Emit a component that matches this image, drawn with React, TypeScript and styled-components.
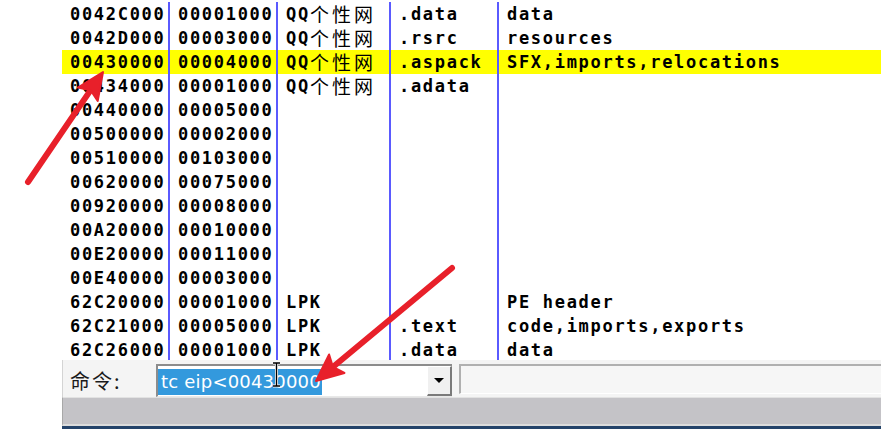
import React from 'react'
import styled, { createGlobalStyle } from 'styled-components'

const GlobalStyle = createGlobalStyle`
  html, body {
    margin: 0;
    padding: 0;
    background: #ffffff;
    overflow: hidden;
  }
`

type MemRow = {
  address: string
  size: string
  owner?: string
  section?: string
  contains?: string
  selected?: boolean
}

const ROWS: MemRow[] = [
  { address: '0042C000', size: '00001000', owner: 'QQ个性网', section: '.data', contains: 'data' },
  { address: '0042D000', size: '00003000', owner: 'QQ个性网', section: '.rsrc', contains: 'resources' },
  {
    address: '00430000',
    size: '00004000',
    owner: 'QQ个性网',
    section: '.aspack',
    contains: 'SFX,imports,relocations',
    selected: true,
  },
  { address: '00434000', size: '00001000', owner: 'QQ个性网', section: '.adata' },
  { address: '00440000', size: '00005000' },
  { address: '00500000', size: '00002000' },
  { address: '00510000', size: '00103000' },
  { address: '00620000', size: '00075000' },
  { address: '00920000', size: '00008000' },
  { address: '00A20000', size: '00010000' },
  { address: '00E20000', size: '00011000' },
  { address: '00E40000', size: '00003000' },
  { address: '62C20000', size: '00001000', owner: 'LPK', contains: 'PE header' },
  { address: '62C21000', size: '00005000', owner: 'LPK', section: '.text', contains: 'code,imports,exports' },
  { address: '62C26000', size: '00001000', owner: 'LPK', section: '.data', contains: 'data' },
]

// 把中文字符拆出来单独用 CJK 字体
const renderOwner = (text?: string) => {
  if (!text) return null
  const parts = text.split(/([\u4e00-\u9fff]+)/).filter(Boolean)
  return parts.map((p, i) => (/[\u4e00-\u9fff]/.test(p) ? <Cjk key={i}>{p}</Cjk> : <span key={i}>{p}</span>))
}

type Pt = [number, number]

const arrowShape = (tail: Pt, tip: Pt, len = 27, half = 12) => {
  const dx = tip[0] - tail[0]
  const dy = tip[1] - tail[1]
  const d = Math.hypot(dx, dy)
  const ux = dx / d
  const uy = dy / d
  const bx = tip[0] - ux * len
  const by = tip[1] - uy * len
  const nx = -uy
  const ny = ux
  const notchX = bx + ux * 5
  const notchY = by + uy * 5
  const head = [
    `${tip[0]},${tip[1]}`,
    `${bx + nx * half},${by + ny * half}`,
    `${notchX},${notchY}`,
    `${bx - nx * half},${by - ny * half}`,
  ].join(' ')
  return { line: { x1: tail[0], y1: tail[1], x2: notchX, y2: notchY }, head }
}

const ARROWS: { tail: Pt; tip: Pt }[] = [
  { tail: [28, 182], tip: [103, 72] },
  { tail: [452, 268], tip: [316, 381] },
]

const App: React.FC = () => {
  return (
    <>
      <GlobalStyle />
      <Page>
        <Window>
          <Table>
            {ROWS.map((row, i) => (
              <Row key={row.address} $selected={!!row.selected} $first={i === 0}>
                <Cell>{row.address}</Cell>
                <Cell>{row.size}</Cell>
                <Cell>{renderOwner(row.owner)}</Cell>
                <Cell>{row.section}</Cell>
                <Cell $last>{row.contains}</Cell>
              </Row>
            ))}
          </Table>
          <CommandBar>
            <CommandLabel>命令:</CommandLabel>
            <ComboBox>
              <ComboInput>
                <Selection>tc eip&lt;00430000</Selection>
              </ComboInput>
              <DropButton>
                <DropArrow />
              </DropButton>
            </ComboBox>
            <InfoField />
          </CommandBar>
          <StatusBar />
        </Window>
        <BottomEdge />

        <Overlay width="881" height="429" viewBox="0 0 881 429">
          {/* I-beam 鼠标光标 */}
          <g stroke="#ffffff" strokeWidth="3" fill="none">
            <path d="M273 363 H280 M276.5 363 V386 M273 386 H280" />
          </g>
          <g stroke="#000000" strokeWidth="1.4" fill="none">
            <path d="M273 363 H280 M276.5 363 V386 M273 386 H280" />
          </g>
          {ARROWS.map((a, i) => {
            const s = arrowShape(a.tail, a.tip)
            return (
              <g key={i}>
                <line {...s.line} stroke="#e8202a" strokeWidth="6" strokeLinecap="round" />
                <polygon points={s.head} fill="#e8202a" stroke="#e8202a" strokeWidth="2" strokeLinejoin="round" />
              </g>
            )
          })}
        </Overlay>
      </Page>
    </>
  )
}

export default App

const Page = styled.div`
  position: relative;
  width: 881px;
  height: 429px;
  overflow: hidden;
  background: #ffffff;
  display: flex;
  flex-direction: column;
`

const Window = styled.div`
  margin-left: 62px;
  display: flex;
  flex-direction: column;
  flex: 1;
`

const Table = styled.div`
  height: 360px;
  overflow: hidden;
  font-family: 'DejaVu Sans Mono', 'Liberation Mono', monospace;
  font-weight: bold;
  font-size: 17px;
  letter-spacing: 1.7px;
  color: #000000;
`

const Row = styled.div<{ $selected: boolean; $first: boolean }>`
  display: grid;
  grid-template-columns: 108px 108px 113px 108px 1fr;
  height: ${(p) => (p.$first ? 26 : 24)}px;
  padding-top: ${(p) => (p.$first ? 2 : 0)}px;
  box-sizing: border-box;
  background: ${(p) => (p.$selected ? '#ffff00' : 'transparent')};
`

const Cell = styled.div<{ $last?: boolean }>`
  box-sizing: border-box;
  height: 24px;
  line-height: 24px;
  padding-left: 8px;
  white-space: nowrap;
  overflow: hidden;
  border-right: ${(p) => (p.$last ? 'none' : '2px solid #5a5aff')};
`

const Cjk = styled.span`
  display: inline-block;
  height: 24px;
  overflow: hidden;
  font-family: 'Noto Sans CJK SC', sans-serif;
  font-weight: 400;
  font-size: 19px;
  letter-spacing: 3px;
  vertical-align: top;
  line-height: 24px;
`

const CommandBar = styled.div`
  height: 37px;
  box-sizing: border-box;
  background: #f4f4f4;
  border-left: 1px solid #d4d4d4;
  display: flex;
  align-items: center;
  padding-left: 7px;
`

const CommandLabel = styled.div`
  width: 86px;
  font-family: 'Noto Sans CJK SC', sans-serif;
  font-size: 20px;
  color: #1a1a1a;
  letter-spacing: 2px;
  margin-top: 3px;
`

const ComboBox = styled.div`
  display: flex;
  width: 296px;
  height: 33px;
  box-sizing: border-box;
  margin-top: 4px;
  border-top: 2px solid #8c8c8c;
  border-left: 2px solid #8c8c8c;
  border-bottom: 1px solid #e8e8e8;
  background: #ffffff;
`

const ComboInput = styled.div`
  flex: 1;
  display: flex;
  align-items: center;
  padding-top: 1px;
`

const Selection = styled.span`
  display: inline-block;
  height: 26px;
  line-height: 26px;
  padding: 0 1px 0 3px;
  background: #3399dd;
  color: #ffffff;
  font-family: 'DejaVu Sans', 'Liberation Sans', sans-serif;
  font-size: 18px;
  letter-spacing: 0.2px;
`

const DropButton = styled.div`
  width: 25px;
  box-sizing: border-box;
  display: flex;
  align-items: center;
  justify-content: center;
  background: #f0f0f0;
  border-top: 1px solid #ffffff;
  border-left: 1px solid #ffffff;
  border-right: 2px solid #7a7a7a;
  border-bottom: 2px solid #7a7a7a;
`

const DropArrow = styled.div`
  width: 0;
  height: 0;
  border-left: 5px solid transparent;
  border-right: 5px solid transparent;
  border-top: 5px solid #000000;
`

const InfoField = styled.div`
  flex: 1;
  height: 30px;
  margin-left: 7px;
  margin-top: 1px;
  box-sizing: border-box;
  background: #f6f6f6;
  border-top: 2px solid #b0b0b0;
  border-left: 2px solid #b0b0b0;
  border-bottom: 1px solid #ffffff;
`

const StatusBar = styled.div`
  height: 29px;
  box-sizing: border-box;
  background: #c4c3c7;
  border-top: 1px solid #e2e2e2;
  border-bottom: 2px solid #dcdcdc;
  border-left: 1px solid #a8a8a8;
`

const BottomEdge = styled.div`
  height: 3px;
  margin-left: 62px;
  background: #24436a;
`

const Overlay = styled.svg`
  position: absolute;
  left: 0;
  top: 0;
  pointer-events: none;
`
